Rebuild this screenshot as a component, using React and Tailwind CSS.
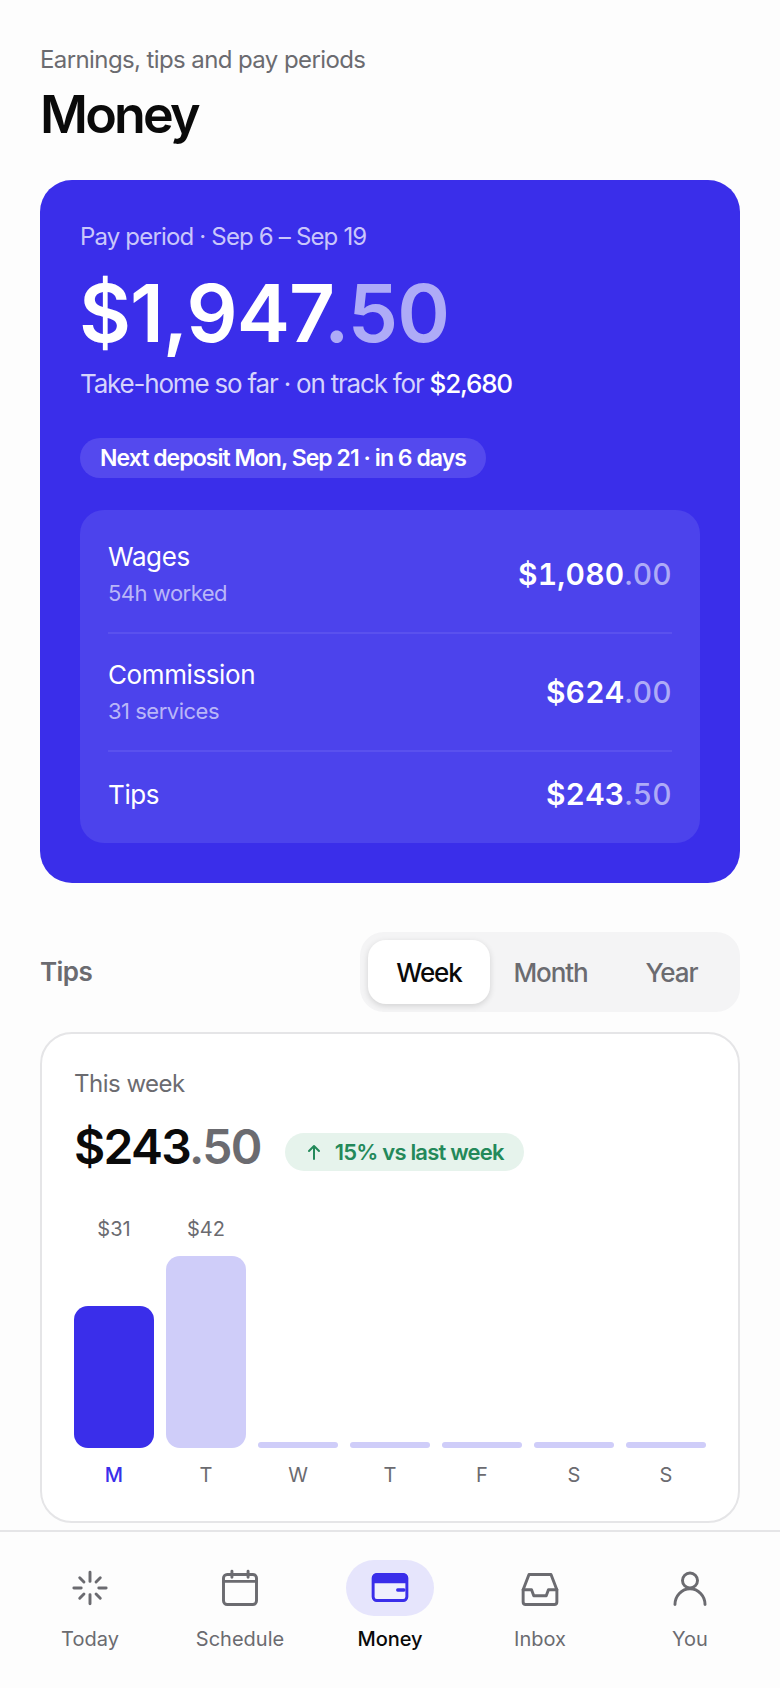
const ink = "text-[#0a0a0a]";

function Amount({ main, cents, dim }) {
  return (
    <>
      {main}
      <span className={dim}>{cents}</span>
    </>
  );
}

function BreakdownRow({ label, sub, main, cents, className }) {
  return (
    <div className={`flex items-center justify-between ${className}`}>
      <div>
        <div className="text-[26px] leading-[32px] tracking-[-0.4px] text-white">{label}</div>
        {sub && <div className="mt-[6px] text-[22px] leading-[28px] tracking-[-0.5px] text-[#b9b6f8]">{sub}</div>}
      </div>
      <div className="text-[30px] font-semibold tracking-[0.2px] text-white tabular-nums">
        <Amount main={main} cents={cents} dim="font-medium text-[#aeabf7]" />
      </div>
    </div>
  );
}

const bars = [
  { day: "M", value: "$31", height: "h-[142px] rounded-[14px]", color: "bg-[#3a2eea]", text: "text-[#3a2eea]" },
  { day: "T", value: "$42", height: "h-[192px] rounded-[14px]", color: "bg-[#cfcdf9]", text: "text-[#6b6b70]" },
  { day: "W", height: "h-[6px] rounded-[3px]", color: "bg-[#cfcdf9]", text: "text-[#6b6b70]" },
  { day: "T", height: "h-[6px] rounded-[3px]", color: "bg-[#cfcdf9]", text: "text-[#6b6b70]" },
  { day: "F", height: "h-[6px] rounded-[3px]", color: "bg-[#cfcdf9]", text: "text-[#6b6b70]" },
  { day: "S", height: "h-[6px] rounded-[3px]", color: "bg-[#cfcdf9]", text: "text-[#6b6b70]" },
  { day: "S", height: "h-[6px] rounded-[3px]", color: "bg-[#cfcdf9]", text: "text-[#6b6b70]" },
];

function TodayIcon() {
  return (
    <svg width="44" height="44" viewBox="0 0 24 24" fill="none" stroke="currentColor" strokeWidth="1.6" strokeLinecap="round">
      <path d="M12 3.4v5M12 15.6v5M3.2 12h4M16.8 12h4M6.4 6.4l2.3 2.3M15.3 15.3l2.3 2.3M6.4 17.6l2.3-2.3M15.3 8.7l2.3-2.3" />
    </svg>
  );
}

function CalendarIcon() {
  return (
    <svg width="44" height="44" viewBox="0 0 24 24" fill="none" stroke="currentColor" strokeWidth="1.6" strokeLinecap="round" strokeLinejoin="round">
      <rect x="3" y="4.6" width="18" height="16.4" rx="2" />
      <path d="M3 8.4h18M7.6 2.8v3.4M16.4 2.8v3.4" />
    </svg>
  );
}

function WalletIcon() {
  return (
    <svg width="44" height="44" viewBox="0 0 24 24" fill="none">
      <rect x="2.8" y="4.6" width="18.4" height="14.2" rx="2" fill="#f0f0fd" stroke="currentColor" strokeWidth="1.6" />
      <path d="M2.8 6.6a2 2 0 0 1 2-2h14.4a2 2 0 0 1 2 2v2.2H2.8z" fill="currentColor" stroke="currentColor" strokeWidth="1.2" />
      <path d="M16.2 13.1h3.4" stroke="currentColor" strokeWidth="1.8" strokeLinecap="round" />
    </svg>
  );
}

function InboxIcon() {
  return (
    <svg width="44" height="44" viewBox="0 0 24 24" fill="none" stroke="currentColor" strokeWidth="1.6" strokeLinecap="round" strokeLinejoin="round">
      <path d="M6 4.6h12l3.2 8.4v6.6a1.4 1.4 0 0 1-1.4 1.4H4.2a1.4 1.4 0 0 1-1.4-1.4V13z" />
      <path d="M2.8 13h4.6l1.2 3.2h6.8l1.2-3.2h4.6" />
    </svg>
  );
}

function PersonIcon() {
  return (
    <svg width="44" height="44" viewBox="0 0 24 24" fill="none" stroke="currentColor" strokeWidth="1.6" strokeLinecap="round" strokeLinejoin="round">
      <circle cx="12" cy="7.9" r="4.1" />
      <path d="M3.8 21c0-4.6 3.6-8.6 8.2-8.6s8.2 4 8.2 8.6" />
    </svg>
  );
}

const tabs = [
  { label: "Today", Icon: TodayIcon },
  { label: "Schedule", Icon: CalendarIcon },
  { label: "Money", Icon: WalletIcon, active: true },
  { label: "Inbox", Icon: InboxIcon },
  { label: "You", Icon: PersonIcon },
];

export default function App() {
  return (
    <div className="flex h-[1688px] flex-col overflow-hidden bg-[#fdfdfd] font-['Inter',sans-serif]">
      <div className="flex-1 px-10 pt-[44px]">
        <p className="text-[24px] leading-[32px] tracking-[-0.6px] text-[#6b6b70]">Earnings, tips and pay periods</p>
        <h1 className={`mt-[7px] text-[52px] leading-[64px] font-semibold tracking-[-2.8px] ${ink}`}>Money</h1>

        <section className="mt-[33px] rounded-[32px] bg-[#3a2eea] px-10 pt-[41px] pb-10">
          <p className="text-[24px] leading-[32px] tracking-[-0.83px] text-[#c9c6fb]">Pay period · Sep 6 – Sep 19</p>
          <div className="mt-[14px] -ml-[1px] text-[80px] leading-[92px] font-semibold tracking-[-1px] text-white">
            <Amount main="$1,947" cents=".50" dim="text-[#aeabf7]" />
          </div>
          <p className="mt-[8px] text-[26px] leading-[34px] tracking-[-1.2px] text-[#d5d3fc]">
            Take-home so far · on track for <span className="font-medium text-white">$2,680</span>
          </p>
          <div className="mt-[37px] inline-block rounded-full bg-[#5449ee] px-5 py-[6px] align-top text-[23px] leading-[28px] font-semibold tracking-[-0.95px] text-white">
            Next deposit Mon, Sep 21 · in 6 days
          </div>
          <div className="mt-[32px] rounded-[24px] bg-[#4c43ec] px-7">
            <BreakdownRow label="Wages" sub="54h worked" main="$1,080" cents=".00" className="h-[124px] border-b-2 border-[#5a51ee] pt-[6px]" />
            <BreakdownRow label="Commission" sub="31 services" main="$624" cents=".00" className="h-[118px] border-b-2 border-[#5a51ee]" />
            <BreakdownRow label="Tips" main="$243" cents=".50" className="h-[91px] pb-[6px]" />
          </div>
        </section>

        <div className="mt-[49px] flex items-center justify-between">
          <h2 className="-mt-[2px] text-[26px] font-semibold tracking-[-0.6px] text-[#6b6b70]">Tips</h2>
          <div className="flex w-[380px] rounded-[24px] bg-[#f4f4f5] p-2">
            <div className={`flex h-16 w-[122px] items-center justify-center rounded-[18px] bg-white text-[26px] font-medium tracking-[-1.1px] shadow-[0_2px_6px_rgba(0,0,0,0.14)] ${ink}`}>Week</div>
            <div className="flex h-16 flex-1 items-center justify-center text-[26px] font-medium tracking-[-1.1px] text-[#6b6b70]">Month</div>
            <div className="flex h-16 flex-1 items-center justify-center text-[26px] font-medium tracking-[-1.1px] text-[#6b6b70]">Year</div>
          </div>
        </div>

        <section className="mt-[20px] rounded-[32px] border-2 border-[#e5e5e7] bg-white px-8 pt-[34px] pb-[32px]">
          <p className="text-[24px] leading-[32px] tracking-[-0.5px] text-[#6b6b70]">This week</p>
          <div className="mt-[17px] flex items-center gap-6">
            <div className={`text-[48px] leading-[60px] font-semibold tracking-[-1.7px] ${ink}`}>
              <Amount main="$243" cents=".50" dim="text-[#6b6b70]" />
            </div>
            <div className="mt-[10px] flex h-[38px] items-center gap-[12px] rounded-full bg-[#e6f3ec] px-[20px] text-[22px] font-semibold tracking-[-0.8px] text-[#23895a]">
              <svg width="18" height="18" viewBox="0 0 18 18" fill="none" stroke="currentColor" strokeWidth="2" strokeLinecap="round" strokeLinejoin="round">
                <path d="M9 16V3M4 8l5-5 5 5" />
              </svg>
              15% vs last week
            </div>
          </div>
          <div className="mt-[38px] flex gap-3">
            {bars.map((bar, i) => (
              <div key={i} className="flex h-[233px] flex-1 flex-col items-center justify-between">
                <div className="h-[28px] text-[20px] leading-[28px] text-[#6b6b70]">{bar.value}</div>
                <div className={`w-full ${bar.height} ${bar.color}`} />
              </div>
            ))}
          </div>
          <div className="mt-[13px] flex gap-3">
            {bars.map((bar, i) => (
              <div key={i} className={`flex-1 text-center text-[20px] leading-[28px] ${i === 0 ? "font-medium" : ""} ${bar.text}`}>{bar.day}</div>
            ))}
          </div>
        </section>
      </div>

      <nav className="flex h-[158px] shrink-0 border-t-2 border-[#e5e5e7] bg-[#fdfdfd] px-[15px] pt-[28px]">
        {tabs.map(({ label, Icon, active }) => (
          <div key={label} className="flex flex-1 flex-col items-center">
            <div className={`flex h-14 w-[88px] items-center justify-center rounded-full ${active ? "bg-[#e6e5fc] text-[#3a2eea]" : "text-[#6b6b70]"}`}>
              <Icon />
            </div>
            <span className={`mt-[9px] text-[20px] leading-[28px] ${active ? `font-medium ${ink}` : "text-[#6b6b70]"}`}>{label}</span>
          </div>
        ))}
      </nav>
    </div>
  );
}
